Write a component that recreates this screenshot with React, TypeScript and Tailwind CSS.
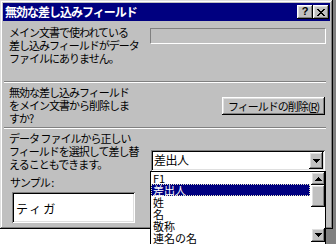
import React from "react";

const raised =
  "shadow-[inset_-1px_-1px_#000,inset_1px_1px_#fff,inset_-2px_-2px_#808080,inset_2px_2px_#dfdfdf]";
const sunken =
  "shadow-[inset_1px_1px_#808080,inset_-1px_-1px_#fff,inset_2px_2px_#000,inset_-2px_-2px_#dfdfdf]";

function Down() {
  return (
    <svg width="7" height="4" viewBox="0 0 7 4" shapeRendering="crispEdges">
      <path d="M0 0h7v1H0zM1 1h5v1H1zM2 2h3v1H2zM3 3h1v1H3z" fill="#000" />
    </svg>
  );
}
function Up() {
  return (
    <svg width="7" height="4" viewBox="0 0 7 4" shapeRendering="crispEdges">
      <path d="M3 0h1v1H3zM2 1h3v1H2zM1 2h5v1H1zM0 3h7v1H0z" fill="#000" />
    </svg>
  );
}

function Separator() {
  return <div className="h-[2px] shrink-0 ml-[1px] mr-[4px] border-t border-t-[#808080] border-b border-b-white" />;
}

export default function App() {
  const items = ["F1", "差出人", "姓", "名", "敬称", "連名の名"];
  return (
    <div className="w-[336px] h-[244px] overflow-hidden bg-[linear-gradient(to_right,#fff_325px,#808080_325px)] font-['Noto_Sans_CJK_JP',sans-serif] text-black">
      <div className="w-[333px] h-[229px] bg-[#c0c0c0] p-[3px] flex flex-col shadow-[inset_-1px_-1px_#000,inset_1px_1px_#dfdfdf,inset_-2px_-2px_#808080,inset_2px_2px_#fff]">
        {/* Title bar */}
        <div className="h-[18px] shrink-0 bg-[#000080] flex items-center pl-[2px] pr-[1px]">
          <span className="text-white font-bold text-[12px] leading-[18px] tracking-[-1px]">
            無効な差し込みフィールド
          </span>
          <div className="ml-auto flex">
            <div className={`w-[16px] h-[14px] bg-[#c0c0c0] ${raised} flex items-center justify-center`}>
              <span className="font-['Liberation_Sans',sans-serif] font-bold text-[11px] leading-none mt-[-1px]">?</span>
            </div>
            <div className={`w-[16px] h-[14px] bg-[#c0c0c0] ${raised} flex items-center justify-center`}>
              <svg width="8" height="7" viewBox="0 0 8 7" shapeRendering="crispEdges">
                <path
                  d="M0 0h2v1H0zM6 0h2v1H6zM1 1h2v1H1zM5 1h2v1H5zM2 2h4v1H2zM3 3h2v1H3zM2 4h4v1H2zM1 5h2v1H1zM5 5h2v1H5zM0 6h2v1H0zM6 6h2v1H6z"
                  fill="#000"
                />
              </svg>
            </div>
          </div>
        </div>

        {/* Section 1 */}
        <div className="h-[60px] shrink-0 flex justify-between items-start pl-[6px] pr-[4px] pt-[5px]">
          <p className="text-[11px] leading-[13px] tracking-[-1px] whitespace-nowrap">
            メイン文書で使われている
            <br />
            差し込みフィールドがデータ
            <br />
            ファイルにありません。
          </p>
          <div className="w-[176px] h-[16px] mt-[2px] bg-[#c0c0c0] border-t border-l border-t-[#808080] border-l-[#808080] border-b border-r border-b-white border-r-white" />
        </div>
        <Separator />

        {/* Section 2 */}
        <div className="h-[44px] shrink-0 flex justify-between items-start pl-[6px] pr-[5px] pt-[3px]">
          <p className="text-[11px] leading-[13px] tracking-[-1px] whitespace-nowrap">
            無効な差し込みフィールド
            <br />
            をメイン文書から削除しま
            <br />
            すか?
          </p>
          <div className={`w-[103px] h-[18px] mt-[11px] bg-[#c0c0c0] ${raised} flex items-center justify-center text-[11px] tracking-[-1px] leading-none whitespace-nowrap`}>
            フィールドの削除(<span className="underline">R</span>)
          </div>
        </div>
        <Separator />

        {/* Section 3 */}
        <div className="flex-1 flex justify-between items-start pl-[6px] pr-[5px] pt-[3px]">
          <div className="flex flex-col">
            <p className="text-[11px] leading-[13px] tracking-[-1px] whitespace-nowrap">
              データ ファイルから正しい
              <br />
              フィールドを選択して差し替
              <br />
              えることもできます。
            </p>
            <p className="mt-[5px] ml-[1px] text-[11px] leading-[13px] tracking-[-1px]">サンプル :</p>
            <div className={`ml-[3px] mt-[3px] w-[123px] h-[31px] bg-white ${sunken} pl-[4px] pt-[3px]`}>
              <span className="text-[12px] leading-[14px] tracking-[2px]">ティガ</span>
            </div>
          </div>

          <div className={`relative mt-[18px] w-[174px] h-[21px] bg-white ${sunken} flex items-center pl-[3px] pr-[2px]`}>
            <span className="text-[12px] leading-[14px] tracking-[-0.5px] mt-[-2px]">差出人</span>
            <div className={`ml-auto w-[14px] h-[17px] bg-[#c0c0c0] ${raised} flex items-center justify-center`}>
              <Down />
            </div>

            {/* Dropdown list */}
            <div className="absolute left-[-1px] top-full w-[176px] h-[80px] bg-white border border-black flex z-10">
              <div className="flex-1 flex flex-col">
                {items.map((it, i) => (
                  <div
                    key={it}
                    className={
                      i === 1
                        ? "h-[12px] mr-[1px] bg-[#000080] text-white border border-dotted border-[#e8e8c0] pl-[1px] flex items-center"
                        : "h-[12px] pl-[2px] flex items-center"
                    }
                  >
                    <span className="text-[11px] leading-[12px]">{it}</span>
                  </div>
                ))}
              </div>
              <div className="w-[14px] flex flex-col bg-white">
                <div className={`h-[13px] bg-[#c0c0c0] ${raised} flex items-center justify-center`}>
                  <Up />
                </div>
                <div className={`h-[22px] bg-[#c0c0c0] ${raised}`} />
                <div className="h-[21px]" />
                <div className={`h-[14px] bg-[#c0c0c0] ${raised} flex items-center justify-center`}>
                  <Down />
                </div>
              </div>
            </div>
          </div>
        </div>
      </div>
    </div>
  );
}
